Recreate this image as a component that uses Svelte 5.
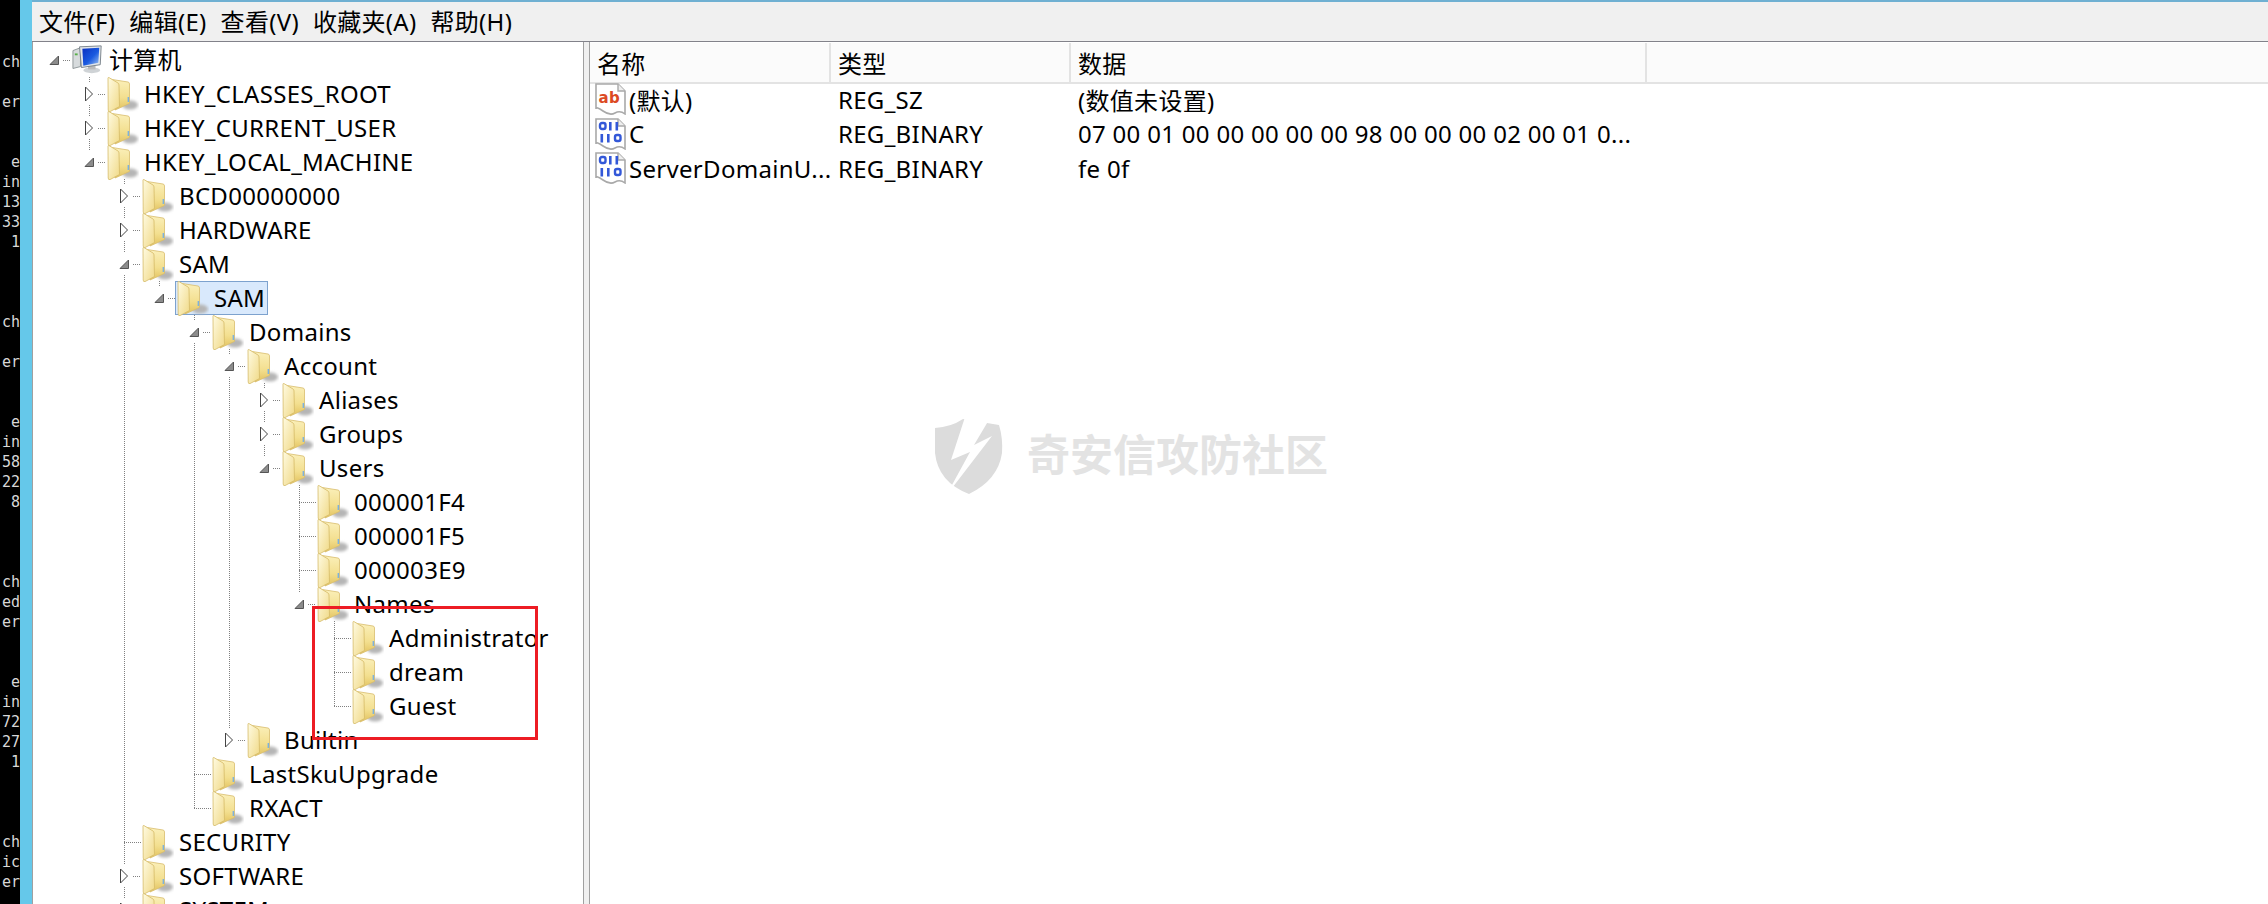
<script>
  const termLines = {0:'ch',2:'er',5:'e',6:'in',7:'13',8:'33',9:'1',13:'ch',15:'er',18:'e',19:'in',20:'58',21:'22',22:'8',26:'ch',27:'ed',28:'er',31:'e',32:'in',33:'72',34:'27',35:'1',39:'ch',40:'ic',41:'er'};
  const term = Array.from({ length: 43 }, (_, i) => termLines[i] ?? '');
  const menus = ['文件(F)', '编辑(E)', '查看(V)', '收藏夹(A)', '帮助(H)'];
  // state: o open, c closed, '' leaf
  const nodes = [
    ['计算机',0,'o'],['HKEY_CLASSES_ROOT',1,'c'],['HKEY_CURRENT_USER',1,'c'],['HKEY_LOCAL_MACHINE',1,'o'],
    ['BCD00000000',2,'c'],['HARDWARE',2,'c'],['SAM',2,'o'],['SAM',3,'o'],['Domains',4,'o'],['Account',5,'o'],
    ['Aliases',6,'c'],['Groups',6,'c'],['Users',6,'o'],['000001F4',7,''],['000001F5',7,''],['000003E9',7,''],
    ['Names',7,'o'],['Administrator',8,''],['dream',8,''],['Guest',8,''],['Builtin',5,'c'],['LastSkuUpgrade',4,''],
    ['RXACT',4,''],['SECURITY',2,''],['SOFTWARE',2,'c'],['SYSTEM',2,'c']
  ].map(([label, level, state], i) => ({ label, level, state, i }));

  const rowH = 34;
  const cy = (i) => 18 + i * rowH;
  const lx = (l) => 56 + 35 * (l - 1);
  const lines = [];
  nodes.forEach((n) => {
    if (n.level === 0) return;
    let p = n.i - 1;
    while (nodes[p].level >= n.level) p--;
    lines.push({ x1: lx(n.level), y1: cy(p) + 17, x2: lx(n.level), y2: cy(n.i) });
    const start = n.state ? lx(n.level) + 9 : lx(n.level);
    lines.push({ x1: start, y1: cy(n.i), x2: lx(n.level) + 17, y2: cy(n.i) });
  });
  lines.push({ x1: lx(0) + 9, y1: cy(0), x2: lx(0) + 17, y2: cy(0) });

  const values = [
    { name: '(默认)', type: 'REG_SZ', data: '(数值未设置)', icon: 'ab' },
    { name: 'C', type: 'REG_BINARY', data: '07 00 01 00 00 00 00 00 98 00 00 00 02 00 01 0...', icon: 'bin' },
    { name: 'ServerDomainU...', type: 'REG_BINARY', data: 'fe 0f', icon: 'bin' }
  ];
</script>

<svg class="defs" aria-hidden="true">
  <defs>
    <linearGradient id="fBack" x1="0" y1="0" x2="0" y2="1"><stop offset="0" stop-color="#fbf0bb"/><stop offset="0.6" stop-color="#f3df8f"/><stop offset="1" stop-color="#e2c25e"/></linearGradient>
    <linearGradient id="fFront" x1="0" y1="0" x2="1" y2="1"><stop offset="0" stop-color="#fffbe2"/><stop offset="1" stop-color="#f0d987"/></linearGradient>
    <linearGradient id="screen" x1="0" y1="0" x2="1" y2="1"><stop offset="0" stop-color="#0a2fc0"/><stop offset="0.55" stop-color="#1a5ae0"/><stop offset="1" stop-color="#9fc4f2"/></linearGradient>
    <filter id="soft" x="-40%" y="-40%" width="180%" height="180%"><feGaussianBlur stdDeviation="1.8"/></filter>
    <symbol id="folder" viewBox="0 0 32 36">
      <ellipse cx="23" cy="29" rx="8" ry="4.5" fill="#b5b5b5" filter="url(#soft)"/>
      <path d="M2 3 L21 6 Q22.5 6.3 22.5 8 L22.5 27.5 L8 34 Z" fill="url(#fBack)" stroke="#d8bd6c" stroke-width="0.8"/>
      <path d="M1 2 Q1 1.2 2 1.6 L11 7 Q12 7.6 12 9 L12.5 30.5 L3 35.6 Q1.2 36 1.2 34 Z" fill="url(#fFront)" stroke="#d6bb68" stroke-width="0.8"/>
      <rect x="20.6" y="21" width="1.5" height="5" fill="#7db2dc"/>
    </symbol>
    <symbol id="paper" viewBox="0 0 32 32">
      <path d="M1 1 H23 L30 8 V31 Q25 27 20 30 T8 28 T1 26 Z" fill="#fff" stroke="#a9a9a9" stroke-width="1.6"/>
      <path d="M23 1 V8 H30" fill="#eee" stroke="#a9a9a9" stroke-width="1.4"/>
    </symbol>
  </defs>
</svg>

<div class="screen">
  <div class="term">{#each term as t}<span class="tl">{t}</span>{/each}</div>
  <div class="accent"></div>
  <div class="window">
    <nav class="menu">
      {#each menus as m}<span class="mi">{m}</span>{/each}
    </nav>
    <div class="panes">
      <section class="tree">
        <svg class="wires" width="560" height="870" aria-hidden="true">
          {#each lines as l}
            <line x1={l.x1} y1={l.y1} x2={l.x2} y2={l.y2} />
          {/each}
        </svg>
        {#each nodes as n}
          <div class="row" style="padding-left:{14 + 35 * n.level}px">
            <span class="tog" class:has={n.state}>
              {#if n.state === 'o'}
                <svg width="14" height="14" viewBox="0 0 14 14"><path d="M11.5 3 V11.5 H3 Z" fill="#8c8c8c" stroke="#555" stroke-width="1"/></svg>
              {:else if n.state === 'c'}
                <svg width="14" height="18" viewBox="0 0 14 18"><path d="M3.5 2 L10.5 9 L3.5 16 Z" fill="#fff" stroke="#444" stroke-width="1"/></svg>
              {/if}
            </span>
            <span class="item" class:sel={n.i === 7}>
              {#if n.level === 0}
                <svg class="ico" width="34" height="32" viewBox="0 0 34 32">
                  <ellipse cx="21" cy="27" rx="9" ry="3" fill="#cfd3d6"/>
                  <rect x="17" y="22" width="8" height="4" fill="#bbb"/>
                  <path d="M1 6 L9 3 V23 L1 25 Z" fill="#d7dbdd" stroke="#8d9598"/>
                  <rect x="3" y="9" width="3" height="2" fill="#58b04a"/>
                  <path d="M8 2 L31 1 L30 21 L10 24 Z" fill="#e2e6ea" stroke="#77818a"/>
                  <path d="M11 4 L29 3 L28 19 L12 22 Z" fill="url(#screen)"/>
                </svg>
              {:else}
                <svg class="ico" width="32" height="36"><use href="#folder"/></svg>
              {/if}
              <span class="lab">{n.label}</span>
            </span>
          </div>
        {/each}
      </section>
      <section class="list">
        <div class="head">
          <span class="hc c1">名称</span><span class="hc c2">类型</span><span class="hc c3">数据</span><span class="hc rest"></span>
        </div>
        <div class="vals">
          {#each values as v}
            <div class="vrow">
              <span class="cell c1 nm">
                <svg class="vico" width="32" height="32" viewBox="0 0 32 32">
                  <use href="#paper"/>
                  {#if v.icon === 'ab'}
                    <text x="3.5" y="20" class="ab">ab</text>
                  {:else}
                    <g fill="none" stroke="#3358d8" stroke-width="2.4">
                      <rect x="5" y="5" width="5.5" height="6" rx="2"/>
                      <rect x="20" y="17" width="5.5" height="6" rx="2"/>
                    </g>
                    <g fill="#3358d8">
                      <rect x="14" y="4" width="2.6" height="8.5"/><rect x="20.5" y="4" width="2.6" height="8.5"/>
                      <rect x="5.5" y="16" width="2.6" height="8.5"/><rect x="12" y="16" width="2.6" height="8.5"/>
                    </g>
                  {/if}
                </svg>
                {v.name}
              </span>
              <span class="cell c2">{v.type}</span>
              <span class="cell c3">{v.data}</span>
            </div>
          {/each}
        </div>
      </section>
    </div>
  </div>

  <div class="mark">
    <svg width="70" height="88" viewBox="0 0 70 88">
      <path d="M2 20 Q18 19 30 11 L66 17 Q70 30 69 45 Q65 72 36 86 Q5 74 2 45 Z" fill="#dcdcdc"/>
      <polygon points="33,6 18,52 37,44 13,88 59,28 41,37 63,0 52,14 50,0" fill="#fff"/>
    </svg>
    <span class="mark-text">奇安信攻防社区</span>
  </div>
  <div class="redbox"></div>
</div>

<style>
  :global(body) { margin: 0; background: #000; }
  .defs { position: absolute; width: 0; height: 0; }
  .screen {
    position: relative; display: flex; width: 2268px; height: 904px; overflow: hidden;
    background: #000; color: #000;
    font-family: "Noto Sans", "Noto Sans CJK SC", sans-serif; font-size: 24px; letter-spacing: 0.3px;
  }
  .term {
    flex: 0 0 20px; padding-top: 52px; box-sizing: border-box; overflow: hidden;
    font-family: "DejaVu Sans Mono", monospace; font-size: 15px; line-height: 20px; letter-spacing: 0; color: #d8d8d8; text-align: right;
  }
  .tl { display: block; height: 20px; }
  .accent { flex: 0 0 12px; background: #65c8ea; }
  .window { flex: 1; display: flex; flex-direction: column; min-width: 0; background: #f0f0f0; }
  .menu {
    height: 39px; margin-top: 2px; flex: none; display: flex; align-items: center; padding: 0 0 3px 2px; box-sizing: border-box;
    background: #f0f0f0; box-shadow: 0 -2px 0 #6fb0d2;
  }
  .mi { padding: 0 5px; margin-right: 4px; white-space: nowrap; }
  .panes { flex: 1; display: flex; min-height: 0; border-top: 1.5px solid #82828a; }
  .tree {
    position: relative; flex: 0 0 552px; padding-top: 1px; background: #fff; overflow: hidden; box-sizing: border-box;
    border-left: 1px solid #a0a0a0; border-right: 1px solid #a0a0a0;
  }
  .wires { position: absolute; left: 0; top: 0; }
  .wires line { stroke: #808080; stroke-width: 1; stroke-dasharray: 1 1; shape-rendering: crispEdges; }
  .row { position: relative; display: flex; align-items: center; height: 34px; white-space: nowrap; }
  .tog { flex: 0 0 14px; height: 22px; display: flex; align-items: center; justify-content: center; }
  .tog.has { background: #fff; }
  .item {
    display: flex; align-items: center; height: 34px; margin-left: 9px; padding: 0 3px 0 2px; box-sizing: border-box; position: relative;
  }
  .sel { background: #d9e9fc; box-shadow: inset 0 0 0 1px #7da2ce; }
  .ico { flex: none; width: 32px; margin-right: 5px; }
  .lab { line-height: 34px; }
  .list { flex: 1; margin-left: 5px; background: #fff; border-left: 1px solid #a0a0a0; min-width: 0; }
  .head { display: flex; height: 39px; margin-top: 1px; background: #fbfbfb; border-bottom: 2px solid #e3e3e3; }
  .hc { box-sizing: border-box; border-right: 2px solid #e3e3e3; padding-left: 7px; line-height: 41px; }
  .rest { border-right: 0; flex: 1; }
  .c1 { flex: 0 0 241px; width: 241px; }
  .c2 { flex: 0 0 240px; width: 240px; }
  .c3 { flex: 0 0 576px; width: 576px; }
  .vals { margin-top: -2px; }
  .vrow { display: flex; height: 34.5px; align-items: center; white-space: nowrap; }
  .cell { box-sizing: border-box; padding-left: 7px; }
  .nm { display: flex; align-items: center; padding-left: 5px; }
  .vico { flex: none; margin-right: 2px; }
  .ab { font-family: "DejaVu Sans", sans-serif; font-weight: 700; font-size: 15px; fill: #dc4a24; }
  .mark { position: absolute; left: 933px; top: 408px; display: flex; align-items: center; gap: 24px; letter-spacing: 0; }
  .mark-text { font-family: "Noto Sans CJK SC", sans-serif; font-weight: 700; font-size: 43px; color: #e3e3e3; line-height: 88px; }
  .redbox { position: absolute; left: 312px; top: 606px; width: 226px; height: 134px; box-sizing: border-box; border: 3px solid #ed1c24; }
</style>
